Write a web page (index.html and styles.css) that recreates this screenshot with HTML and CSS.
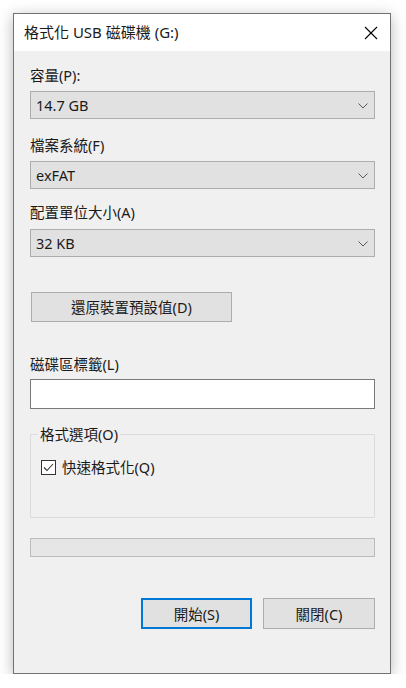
FILE: index.html
```html
<!DOCTYPE html>
<html lang="zh-Hant">
<head>
<meta charset="utf-8">
<title>格式化 USB 磁碟機 (G:)</title>
<link rel="stylesheet" href="styles.css">
</head>
<body>
<div class="window">
  <div class="titlebar">
    <span class="title">格式化 USB 磁碟機 (G:)</span>
    <span class="close">
      <svg width="14" height="14" viewBox="0 0 14 14"><path d="M1 1 L13 13 M13 1 L1 13" stroke="#000" stroke-width="1.1" fill="none"/></svg>
    </span>
  </div>
  <div class="content">
    <div class="label l1">容量(P):</div>
    <div class="combo"><span>14.7 GB</span><svg class="chev" width="10" height="6" viewBox="0 0 10 6"><path d="M0.5 0.5 L5 5 L9.5 0.5" stroke="#5a5a5a" stroke-width="1" fill="none"/></svg></div>
    <div class="label l2">檔案系統(F)</div>
    <div class="combo"><span>exFAT</span><svg class="chev" width="10" height="6" viewBox="0 0 10 6"><path d="M0.5 0.5 L5 5 L9.5 0.5" stroke="#5a5a5a" stroke-width="1" fill="none"/></svg></div>
    <div class="label l3">配置單位大小(A)</div>
    <div class="combo"><span>32 KB</span><svg class="chev" width="10" height="6" viewBox="0 0 10 6"><path d="M0.5 0.5 L5 5 L9.5 0.5" stroke="#5a5a5a" stroke-width="1" fill="none"/></svg></div>
    <div class="btn restore">還原裝置預設值(D)</div>
    <div class="label l4">磁碟區標籤(L)</div>
    <div class="input"></div>
    <fieldset class="group">
      <legend>格式選項(O)</legend>
      <div class="check-row">
        <span class="checkbox"><svg width="13" height="13" viewBox="0 0 13 13"><path d="M2 6.5 L5 9.5 L11 3" stroke="#333" stroke-width="1.1" fill="none"/></svg></span>
        <span>快速格式化(Q)</span>
      </div>
    </fieldset>
    <div class="progress"></div>
    <div class="actions">
      <div class="btn default">開始(S)</div>
      <div class="btn">關閉(C)</div>
    </div>
  </div>
</div>
</body>
</html>
```
FILE: styles.css
```css
html, body {
  margin: 0;
  padding: 0;
  background: #ffffff;
}
body {
  font-family: "Noto Sans", "Noto Sans CJK TC", sans-serif;
  font-size: 14.5px;
  color: #1a1a1a;
}
.window {
  box-sizing: border-box;
  width: 378px;
  height: 661px;
  margin: 13px 0 0 13px;
  border: 1px solid #727272;
  background: #f0f0f0;
  box-shadow: 0 3px 14px rgba(0, 0, 0, 0.28);
  display: flex;
  flex-direction: column;
}
.titlebar {
  height: 37px;
  background: #ffffff;
  display: flex;
  align-items: center;
  justify-content: space-between;
  padding-left: 10px;
  padding-right: 12px;
}
.title {
  font-size: 15px;
  line-height: 20px;
  margin-top: -1px;
}
.close {
  display: flex;
  width: 14px;
  height: 14px;
}
.content {
  display: flex;
  flex-direction: column;
  padding: 14px 15px 0 16px;
}
.label {
  line-height: 20px;
  height: 20px;
}
.l1 { margin-bottom: 6px; }
.l2 { margin-top: 16px; margin-bottom: 6px; }
.l3 { margin-top: 13px; margin-bottom: 7px; }
.l4 { margin-top: 32px; margin-bottom: 5px; }
.combo {
  box-sizing: border-box;
  height: 28px;
  background: #e1e1e1;
  border: 1px solid #adadad;
  display: flex;
  align-items: center;
  justify-content: space-between;
  padding: 0 6px 0 5px;
}
.combo span {
  line-height: 20px;
}
.chev {
  display: block;
  margin-top: 1px;
}
.btn {
  box-sizing: border-box;
  height: 31px;
  background: #e1e1e1;
  border: 1px solid #adadad;
  display: flex;
  align-items: center;
  justify-content: center;
  line-height: 20px;
}
.restore {
  width: 201px;
  height: 30px;
  margin-top: 35px;
  margin-left: 1px;
}
.input {
  box-sizing: border-box;
  height: 30px;
  background: #ffffff;
  border: 1px solid #7a7a7a;
}
.group {
  margin: 15px 0 0 0;
  padding: 13px 10px 40px 10px;
  border: 1px solid #dcdcdc;
  min-width: 0;
}
.group legend {
  padding: 0 2px;
  margin-left: -3px;
  line-height: 20px;
}
.check-row {
  display: flex;
  align-items: center;
  gap: 6px;
  line-height: 20px;
  height: 20px;
}
.checkbox {
  box-sizing: border-box;
  width: 15px;
  height: 15px;
  border: 1px solid #333333;
  background: #ffffff;
  display: flex;
  align-items: center;
  justify-content: center;
}
.checkbox svg {
  display: block;
}
.progress {
  box-sizing: border-box;
  height: 19px;
  margin-top: 20px;
  background: #e6e6e6;
  border: 1px solid #bcbcbc;
}
.actions {
  display: flex;
  justify-content: flex-end;
  gap: 11px;
  margin-top: 41px;
}
.actions .btn {
  width: 112px;
}
.actions .btn.default {
  width: 111px;
  border: 2px solid #0078d7;
}
```
